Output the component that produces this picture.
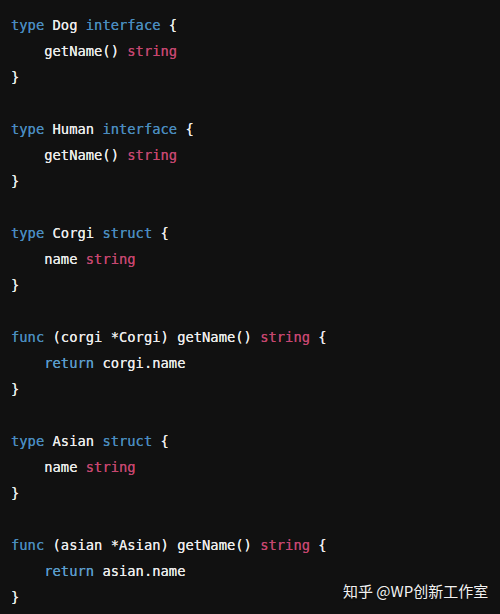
type Tok = [string, string?];

const K = "text-[#4a8cbf]";
const S = "text-[#c5466f]";
const R = "text-[#5b9dcc]";

const lines: Tok[][] = [
  [["type", K], [" Dog "], ["interface", K], [" {"]],
  [["    getName() "], ["string", S]],
  [["}"]],
  [],
  [["type", K], [" Human "], ["interface", K], [" {"]],
  [["    getName() "], ["string", S]],
  [["}"]],
  [],
  [["type", K], [" Corgi "], ["struct", K], [" {"]],
  [["    name "], ["string", S]],
  [["}"]],
  [],
  [["func", K], [" (corgi *Corgi) getName() "], ["string", S], [" {"]],
  [["    "], ["return", R], [" corgi.name"]],
  [["}"]],
  [],
  [["type", K], [" Asian "], ["struct", K], [" {"]],
  [["    name "], ["string", S]],
  [["}"]],
  [],
  [["func", K], [" (asian *Asian) getName() "], ["string", S], [" {"]],
  [["    "], ["return", R], [" asian.name"]],
  [["}"]],
];

export default function App() {
  return (
    <div className="relative w-[500px] h-[614px] bg-[#111111] overflow-hidden">
      <pre className="pl-[11px] pt-[12px] font-['DejaVu_Sans_Mono',monospace] text-[13.8px] leading-[26px] text-[#ececec] [text-shadow:0_0_0.4px_currentColor]">
        {lines.map((line, i) => (
          <div key={i} className="h-[26px] whitespace-pre">
            {line.map(([t, c], j) => (
              <span key={j} className={c}>
                {t}
              </span>
            ))}
          </div>
        ))}
      </pre>
      <div className="absolute left-[343px] top-[580px] font-['Noto_Sans_CJK_SC',sans-serif] text-[15px] leading-[22px] text-[#f2f2f2] [text-shadow:0_0_2px_rgba(0,0,0,0.8)]">
        知乎 @WP创新工作室
      </div>
    </div>
  );
}
